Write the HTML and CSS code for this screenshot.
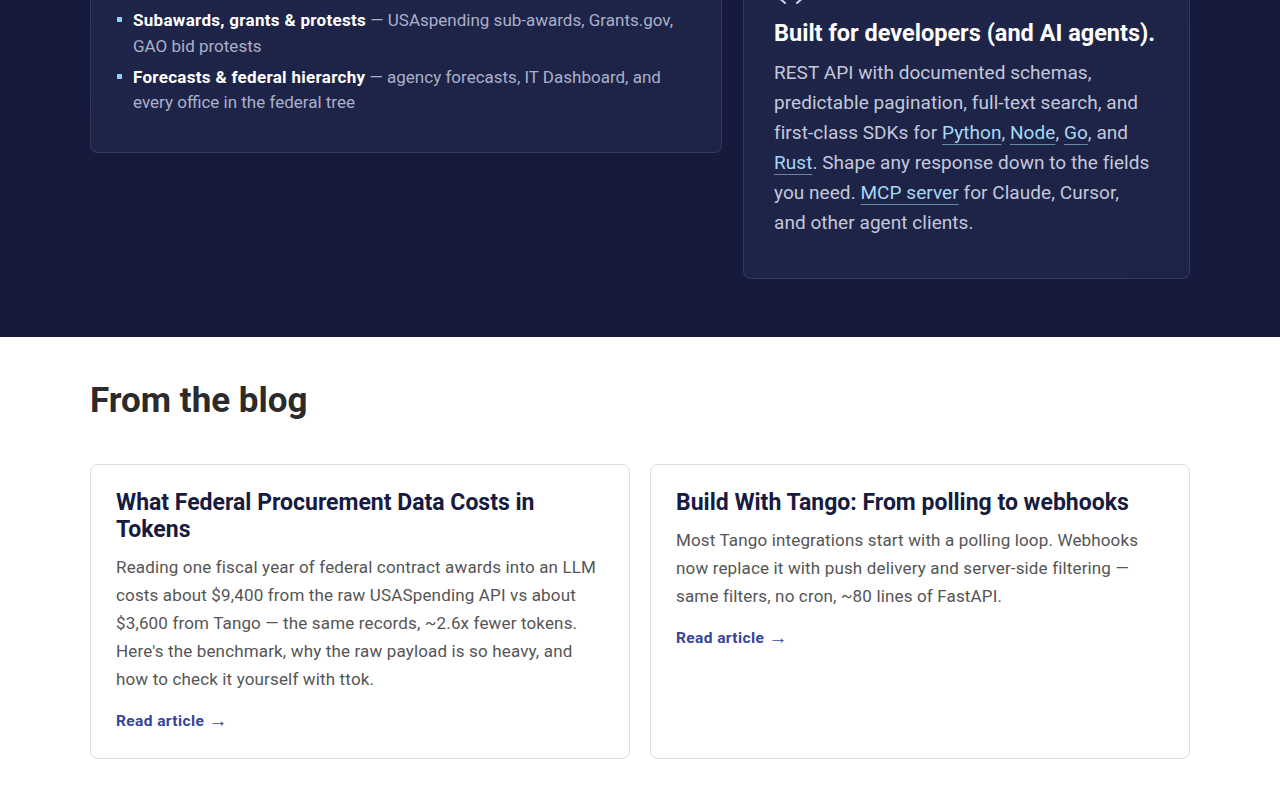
FILE: index.html
```html
<!DOCTYPE html>
<html lang="en">
<head>
<meta charset="utf-8">
<title>Tango</title>
<link rel="stylesheet" href="styles.css">
</head>
<body>
<section class="dark">
  <div class="container features">
    <div class="fcard fcard-data">
      <ul class="feature-list">
        <li><span class="txt"><strong>Subawards, grants &amp; protests</strong> — USAspending sub-awards, Grants.gov, GAO bid protests</span></li>
        <li><span class="txt"><strong>Forecasts &amp; federal hierarchy</strong> — agency forecasts, IT Dashboard, and every office in the federal tree</span></li>
      </ul>
    </div>
    <div class="fcard fcard-dev">
      <svg class="ficon" width="32" height="16" viewBox="0 0 32 16" fill="none" stroke="#c9d3f0" stroke-width="2" stroke-linecap="round" stroke-linejoin="round">
        <path d="M10 2 L3 9 L10 15"/>
        <path d="M22 2 L29 9 L22 15"/>
      </svg>
      <h3 class="fcard-title">Built for developers (and AI agents).</h3>
      <p class="fcard-text">REST API with documented schemas, predictable pagination, full-text search, and first-class SDKs for <a href="#">Python</a>, <a href="#">Node</a>, <a href="#">Go</a>, and <a href="#">Rust</a>. Shape any response down to the fields you need. <a href="#">MCP server</a> for Claude, Cursor, and other agent clients.</p>
    </div>
  </div>
</section>
<section class="blog">
  <div class="container">
    <h2 class="blog-heading">From the blog</h2>
    <div class="blog-grid">
      <article class="post">
        <h3 class="post-title">What Federal Procurement Data Costs in Tokens</h3>
        <p class="post-text">Reading one fiscal year of federal contract awards into an LLM costs about $9,400 from the raw USASpending API vs about $3,600 from Tango — the same records, ~2.6x fewer tokens. Here's the benchmark, why the raw payload is so heavy, and how to check it yourself with ttok.</p>
        <a class="post-link" href="#">Read article <span class="arrow">→</span></a>
      </article>
      <article class="post">
        <h3 class="post-title">Build With Tango: From polling to webhooks</h3>
        <p class="post-text">Most Tango integrations start with a polling loop. Webhooks now replace it with push delivery and server-side filtering — same filters, no cron, ~80 lines of FastAPI.</p>
        <a class="post-link" href="#">Read article <span class="arrow">→</span></a>
      </article>
    </div>
  </div>
</section>
</body>
</html>
```
FILE: styles.css
```css
* { box-sizing: border-box; }
html, body { margin: 0; padding: 0; }
body {
  background: #ffffff;
  font-family: Roboto, "Liberation Sans", Arial, sans-serif;
  color: #333;
}
.container {
  width: 1100px;
  margin: 0 auto;
}

/* Dark feature section */
.dark {
  background: #161b3e;
  padding: 0 0 58px;
}
.features {
  display: grid;
  grid-template-columns: 632px 447px;
  column-gap: 21px;
  align-items: start;
  margin-top: -43px;
}
.fcard {
  background: linear-gradient(160deg, #1f2549 0%, #1d2346 100%);
  border: 1px solid rgba(255, 255, 255, 0.1);
  border-radius: 8px;
}
.fcard-data {
  padding: 30px 25px 36px;
}
.feature-list {
  list-style: none;
  margin: 20px 0 0;
  padding: 0;
}
.feature-list li {
  display: grid;
  grid-template-columns: 17px 1fr;
  font-size: 17px;
  line-height: 25.5px;
  color: #aab0c9;
  letter-spacing: 0;
}
.feature-list li + li { margin-top: 5.5px; }
.feature-list li::before {
  content: "";
  width: 5px;
  height: 5px;
  background: #8fd0f2;
  margin-top: 9px;
  margin-left: 1px;
}
.feature-list strong {
  color: #ffffff;
  font-weight: 700;
  letter-spacing: 0.3px;
}

.fcard-dev {
  padding: 30px 30px 40px;
}
.ficon {
  display: block;
  margin: 0 0 14px 1px;
}
.fcard-title {
  margin: 0;
  font-size: 23.5px;
  line-height: 30px;
  font-weight: 700;
  color: #ffffff;
  letter-spacing: 0;
}
.fcard-text {
  margin: 10px 0 0;
  max-width: 378px;
  font-size: 19px;
  line-height: 30px;
  color: #c3c8db;
  letter-spacing: 0.05px;
}
.fcard-text a {
  color: #a6d8f4;
  text-decoration: underline;
  text-decoration-color: rgba(166, 216, 244, 0.55);
  text-decoration-thickness: 1px;
  text-underline-offset: 5px;
}

/* Blog */
.blog {
  padding: 42px 0 40px;
}
.blog-heading {
  margin: 0 0 41px;
  font-size: 35px;
  line-height: 44px;
  font-weight: 700;
  color: #2b2b2b;
  letter-spacing: 0;
}
.blog-grid {
  display: grid;
  grid-template-columns: 1fr 1fr;
  column-gap: 20px;
}
.post {
  border: 1px solid #dedede;
  border-radius: 8px;
  padding: 24px 25px 27px;
  background: #fff;
}
.post-title {
  margin: 0;
  font-size: 23px;
  line-height: 27px;
  font-weight: 700;
  color: #161b3f;
  letter-spacing: 0;
}
.post-text {
  margin: 10px 0 18px;
  font-size: 17px;
  line-height: 28px;
  color: #555555;
  letter-spacing: 0.15px;
}
.post-link {
  display: inline-block;
  font-size: 15.5px;
  line-height: 20px;
  font-weight: 700;
  color: #35459a;
  text-decoration: none;
  letter-spacing: 0.4px;
}
.post-link .arrow {
  font-size: 19px;
  font-weight: 400;
  line-height: 20px;
  vertical-align: top;
}
```
